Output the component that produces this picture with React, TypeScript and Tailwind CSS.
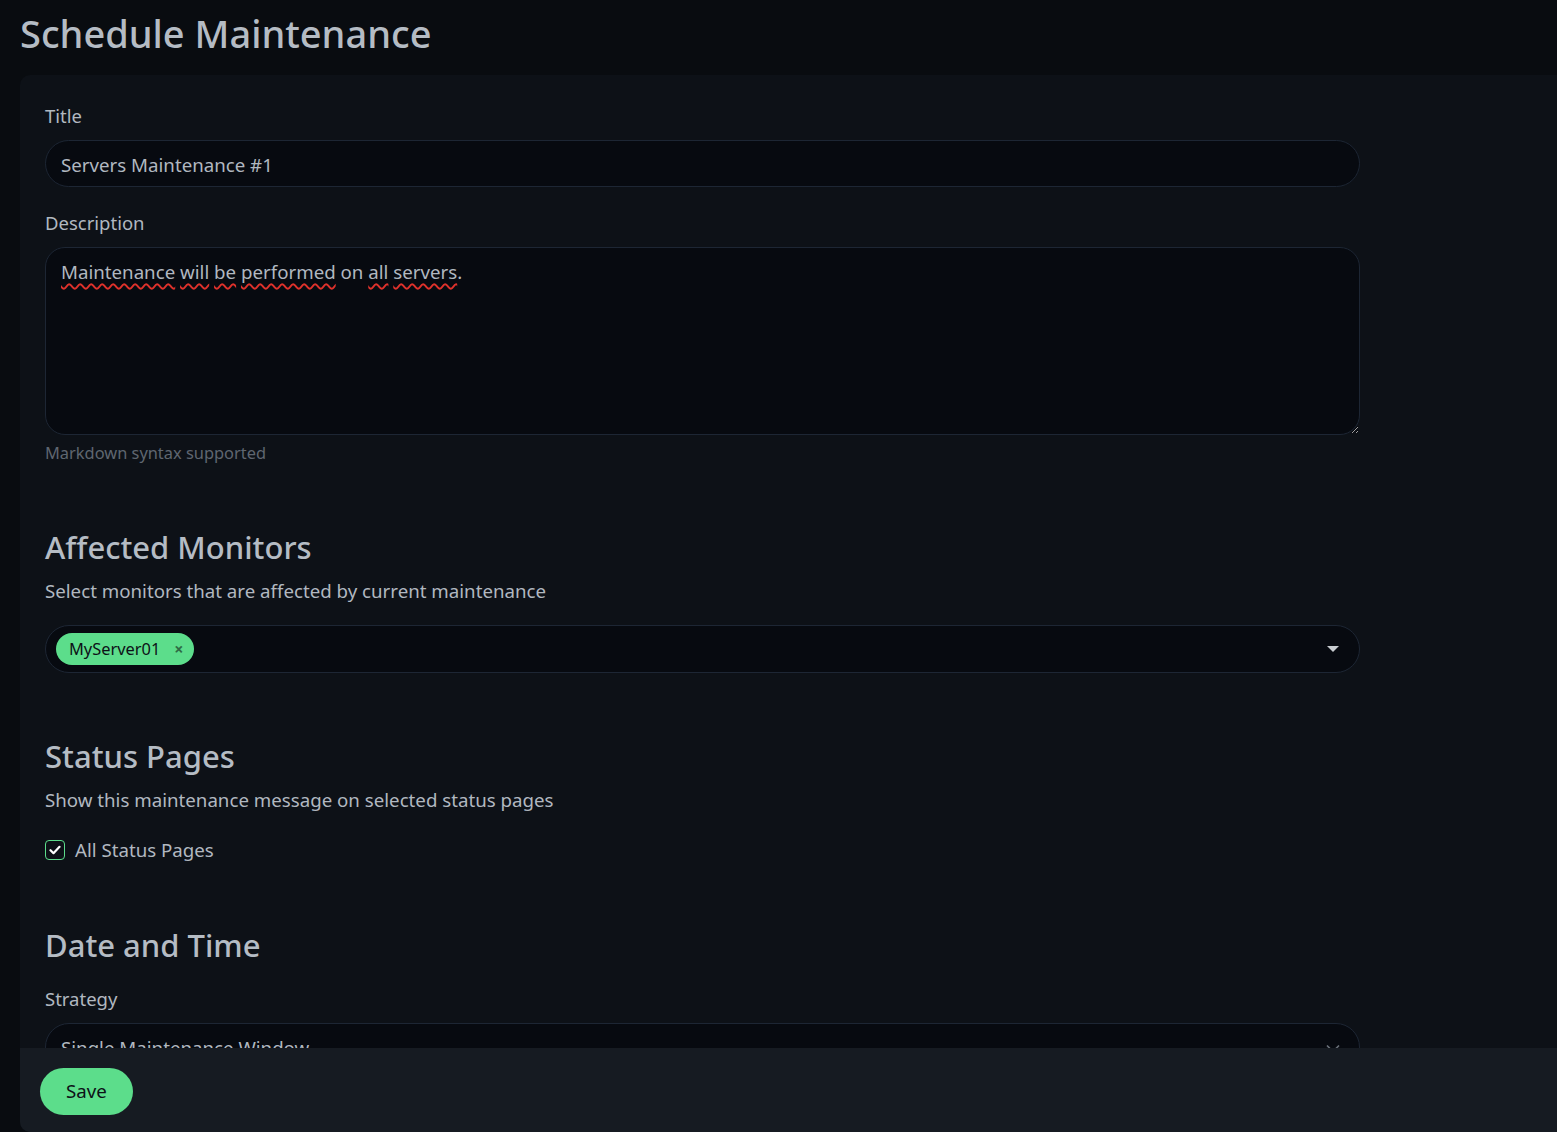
import React from 'react';

const font = { fontFamily: '"Noto Sans", "Open Sans", sans-serif' };

function Label({ children }: { children: React.ReactNode }) {
  return <div className="text-[18.5px] leading-[24px] text-[#b1b8c0] mb-3">{children}</div>;
}

function Squiggle({ children }: { children: React.ReactNode }) {
  return <span className="underline decoration-wavy decoration-[#e0312b] decoration-[1.5px] underline-offset-[4px]">{children}</span>;
}

export default function App() {
  return (
    <div style={font} className="h-screen overflow-hidden bg-[#090c10] flex flex-col pl-5">
      {/* Page title */}
      <h1 className="pt-[9px] mb-[18px] text-[38px] leading-[48px] font-medium text-[#b5bcc4]">Schedule Maintenance</h1>

      {/* Card */}
      <div className="flex-1 min-h-0 bg-[#0d1117] rounded-l-[10px] flex flex-col overflow-hidden">
        <div className="flex-1 min-h-0 overflow-hidden pt-[29px] pl-[25px]">
          <div className="w-[1315px]">
            <Label>Title</Label>
            <div className="h-[47px] rounded-full border border-[#1d2634] bg-[#070a10] flex items-center px-[15px] pt-[3px] text-[18.7px] text-[#b1b8c0]">
              Servers Maintenance #1
            </div>

            <div className="mt-6">
              <Label>Description</Label>
              <div className="h-[188px] resize-y overflow-auto rounded-[20px] border border-[#1d2634] bg-[#070a10] px-[15px] pt-[10px] text-[18.7px] leading-[28px] text-[#b1b8c0]">
                <Squiggle>Maintenance</Squiggle> <Squiggle>will</Squiggle> <Squiggle>be</Squiggle> <Squiggle>performed</Squiggle> on <Squiggle>all</Squiggle> <Squiggle>servers</Squiggle>.
              </div>
              <div className="mt-[6px] text-[16.4px] leading-[24px] text-[#5f6670]">Markdown syntax supported</div>
            </div>

            {/* Affected monitors */}
            <h2 className="mt-[63px] text-[31px] leading-[38px] font-medium text-[#b5bcc4]">Affected Monitors</h2>
            <div className="mt-[13px] text-[18.7px] leading-[24px] text-[#b1b8c0]">Select monitors that are affected by current maintenance</div>
            <div className="mt-[22px] h-[48px] rounded-full border border-[#1d2634] bg-[#070a10] flex items-center pl-[10px] pr-[20px]">
              <span className="h-8 rounded-full bg-[#5cdd8b] flex items-center pl-[13px] pr-[10px] text-[16.4px] text-[#0d1117]">
                MyServer01
                <span className="ml-[14px] text-[16px] leading-none font-bold text-[#2f6b45]">×</span>
              </span>
              <span className="ml-auto">
                <svg width="12" height="8" viewBox="0 0 12 8"><path d="M0 1h12L6 7z" fill="#c8ccd0" /></svg>
              </span>
            </div>

            {/* Status pages */}
            <h2 className="mt-[64px] text-[31px] leading-[38px] font-medium text-[#b5bcc4]">Status Pages</h2>
            <div className="mt-[13px] text-[18.7px] leading-[24px] text-[#b1b8c0]">Show this maintenance message on selected status pages</div>
            <div className="mt-[26px] flex items-center gap-[10px]">
              <span className="w-5 h-5 rounded-[4px] border border-[#5cdd8b] bg-[#0d1117] flex items-center justify-center">
                <svg width="12" height="10" viewBox="0 0 12 10"><path d="M1.5 5.2l3 3 6-6.4" fill="none" stroke="#fff" strokeWidth="2.2" strokeLinecap="round" strokeLinejoin="round" /></svg>
              </span>
              <span className="text-[18.7px] leading-[24px] text-[#b1b8c0]">All Status Pages</span>
            </div>

            {/* Date and time */}
            <h2 className="mt-[64px] text-[31px] leading-[38px] font-medium text-[#b5bcc4]">Date and Time</h2>
            <div className="mt-[23px]"><Label>Strategy</Label></div>
            <div className="h-[48px] rounded-full border border-[#1d2634] bg-[#070a10] flex items-center pl-[15px] pr-[19px] pt-[3px] text-[18.7px] text-[#b1b8c0]">
              Single Maintenance Window
              <svg className="ml-auto" width="14" height="9" viewBox="0 0 14 9"><path d="M1 1.5l6 6 6-6" fill="none" stroke="#6b727a" strokeWidth="1.6" /></svg>
            </div>
          </div>
        </div>

        {/* Sticky footer */}
        <div className="h-[84px] shrink-0 bg-[#161b22] flex items-start pt-[20px] pl-5">
          <button className="h-[47px] w-[93px] rounded-full bg-[#5cdd8b] text-[18.7px] text-[#0d1117]">Save</button>
        </div>
      </div>
    </div>
  );
}
